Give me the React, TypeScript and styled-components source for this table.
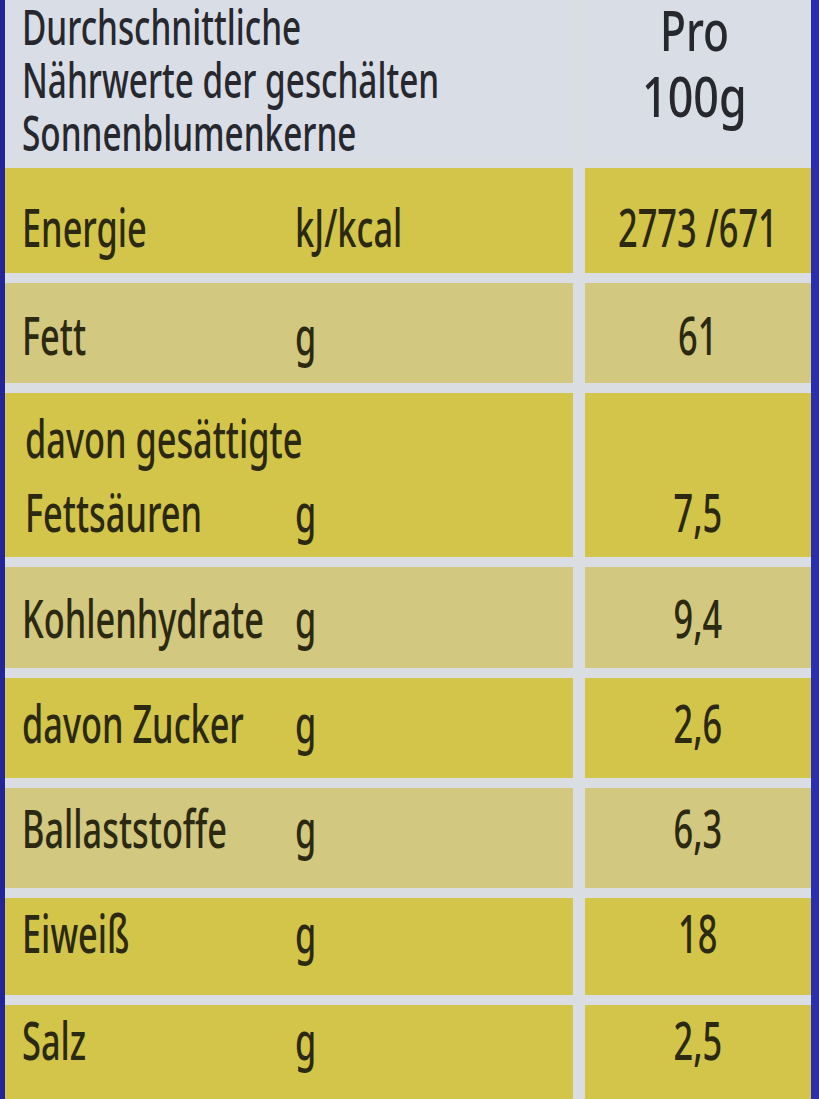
import React from "react";
import styled, { createGlobalStyle } from "styled-components";

const Global = createGlobalStyle`
  html, body { margin: 0; padding: 0; background: #dadee4; }
  body { font-family: "Noto Sans", "Open Sans", sans-serif; }
`;

const Label = styled.div`
  display: grid;
  grid-template-columns: 568px 226px;
  column-gap: 12px;
  row-gap: 10px;
  width: 819px;
  height: 1099px;
  box-sizing: border-box;
  border-left: 5px solid #23239a;
  border-right: 8px solid #2b2fae;
  background: #dadee2;
  overflow: hidden;
  font-family: "Noto Sans", "Open Sans", sans-serif;
  font-weight: 500;
`;

const Squeeze = styled.span<{ $center?: boolean; $scale?: number }>`
  display: inline-block;
  white-space: nowrap;
  transform: scaleX(${(p) => p.$scale ?? 0.66});
  transform-origin: ${(p) => (p.$center ? "center" : "left")};
`;

const HeaderLeft = styled.div`
  height: 158px;
  padding-left: 17px;
  box-sizing: border-box;
  background: #d9dde6;
  color: #26282e;
  font-size: 49px;
  line-height: 53px;
`;

const HeaderRight = styled.div`
  height: 158px;
  background: #d9dde6;
  color: #26282e;
  font-size: 56px;
  line-height: 66px;
  display: flex;
  flex-direction: column;
  align-items: center;
  padding-right: 8px;
  box-sizing: border-box;
  > span:first-child {
    margin-top: -4px;
  }
`;

const Cell = styled.div<{ $h: number; $pale?: boolean; $dy?: number }>`
  height: ${(p) => p.$h}px;
  background: ${(p) => (p.$pale ? "#d2c880" : "#d3c54a")};
  color: #2c2912;
  font-size: 52px;
  line-height: 52px;
  display: flex;
  box-sizing: border-box;
  padding-top: ${(p) => Math.max(0, (p.$dy ?? 0) * 2)}px;
  padding-bottom: ${(p) => Math.max(0, -(p.$dy ?? 0) * 2)}px;
`;

const NameCell = styled(Cell)`
  align-items: center;
  padding-left: 17px;
`;

const MultiNameCell = styled(Cell)`
  flex-direction: column;
  padding-top: 8px;
  padding-left: 20px;
  line-height: 74px;
`;

const ValueCell = styled(Cell)<{ $bottom?: boolean }>`
  justify-content: center;
  align-items: ${(p) => (p.$bottom ? "flex-end" : "center")};
  padding-bottom: ${(p) => (p.$bottom ? "8px" : undefined)};
  line-height: ${(p) => (p.$bottom ? "74px" : "52px")};
`;

const Line = styled.div`
  display: flex;
`;

const Name = styled.span<{ $w?: number }>`
  width: ${(p) => p.$w ?? 273}px;
  flex: none;
`;

const Unit = styled.span``;

type Row = { name: string; unit: string; value: string; h: number; pale?: boolean; dy?: number };

const rows: Row[] = [
  { name: "Energie", unit: "kJ/kcal", value: "2773 /671", h: 105, dy: 6 },
  { name: "Fett", unit: "g", value: "61", h: 100, pale: true, dy: 2 },
];

const rows2: Row[] = [
  { name: "Kohlenhydrate", unit: "g", value: "9,4", h: 101, pale: true },
  { name: "davon Zucker", unit: "g", value: "2,6", h: 100, dy: -5 },
  { name: "Ballaststoffe", unit: "g", value: "6,3", h: 100, pale: true, dy: -10 },
  { name: "Eiweiß", unit: "g", value: "18", h: 97, dy: -14 },
  { name: "Salz", unit: "g", value: "2,5", h: 97, dy: -14 },
];

const renderRow = (r: Row) => (
  <React.Fragment key={r.name}>
    <NameCell $h={r.h} $pale={r.pale} $dy={r.dy}>
      <Name>
        <Squeeze>{r.name}</Squeeze>
      </Name>
      <Unit>
        <Squeeze>{r.unit}</Squeeze>
      </Unit>
    </NameCell>
    <ValueCell $h={r.h} $pale={r.pale} $dy={r.dy}>
      <Squeeze $center>{r.value}</Squeeze>
    </ValueCell>
  </React.Fragment>
);

export default function App() {
  return (
    <>
      <Global />
      <Label>
        <HeaderLeft>
          <div>
            <Squeeze $scale={0.68}>Durchschnittliche</Squeeze>
          </div>
          <div>
            <Squeeze $scale={0.68}>Nährwerte der geschälten</Squeeze>
          </div>
          <div>
            <Squeeze $scale={0.68}>Sonnenblumenkerne</Squeeze>
          </div>
        </HeaderLeft>
        <HeaderRight>
          <Squeeze $center $scale={0.76}>Pro</Squeeze>
          <Squeeze $center $scale={0.8}>100g</Squeeze>
        </HeaderRight>
        {rows.map(renderRow)}
        <MultiNameCell $h={164}>
          <Line>
            <Squeeze>davon gesättigte</Squeeze>
          </Line>
          <Line>
            <Name $w={270}>
              <Squeeze>Fettsäuren</Squeeze>
            </Name>
            <Unit>
              <Squeeze>g</Squeeze>
            </Unit>
          </Line>
        </MultiNameCell>
        <ValueCell $h={164} $bottom>
          <Squeeze $center>7,5</Squeeze>
        </ValueCell>
        {rows2.map(renderRow)}
      </Label>
    </>
  );
}
